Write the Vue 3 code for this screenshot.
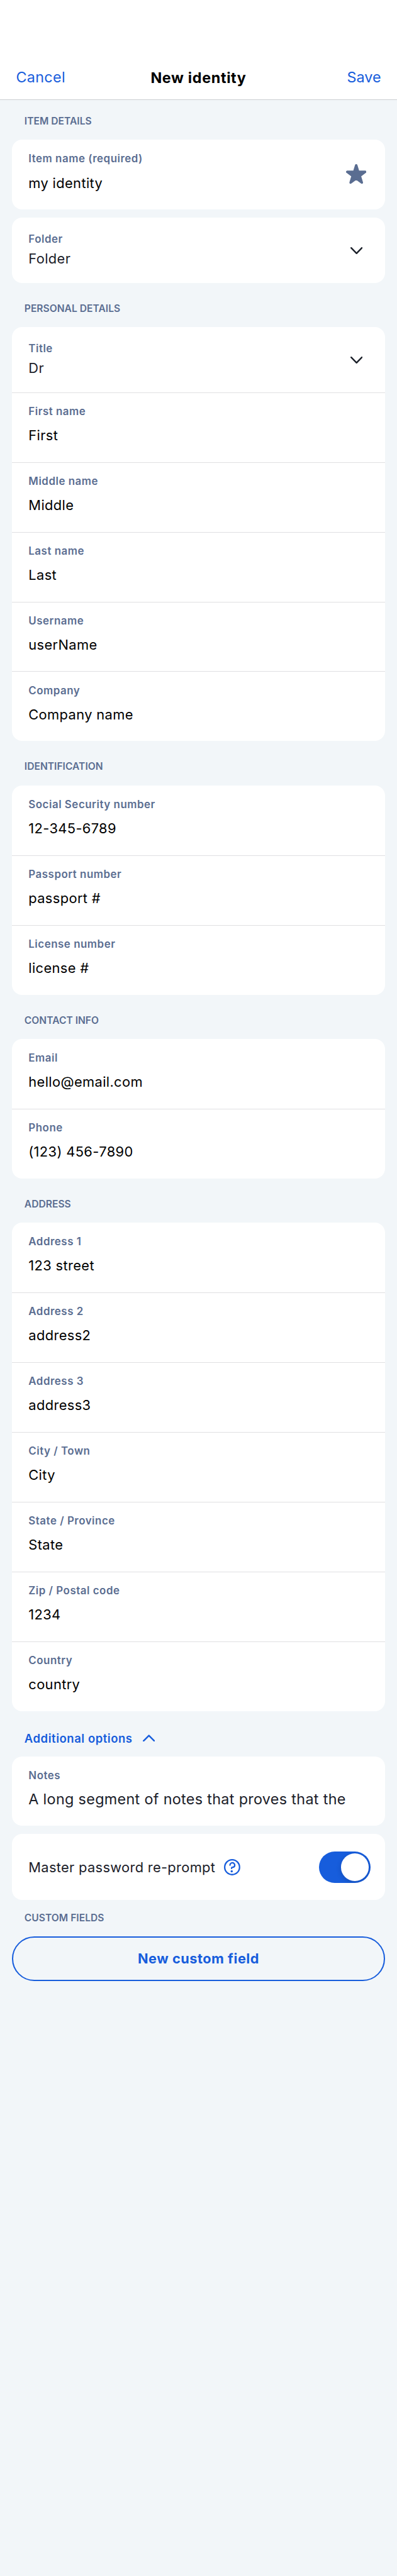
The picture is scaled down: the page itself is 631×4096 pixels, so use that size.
<script setup>
const sections = [
  {
    title: 'PERSONAL DETAILS',
    fields: [
      { label: 'Title', value: 'Dr', picker: true },
      { label: 'First name', value: 'First' },
      { label: 'Middle name', value: 'Middle' },
      { label: 'Last name', value: 'Last' },
      { label: 'Username', value: 'userName' },
      { label: 'Company', value: 'Company name' },
    ],
  },
  {
    title: 'IDENTIFICATION',
    fields: [
      { label: 'Social Security number', value: '12-345-6789' },
      { label: 'Passport number', value: 'passport #' },
      { label: 'License number', value: 'license #' },
    ],
  },
  {
    title: 'CONTACT INFO',
    fields: [
      { label: 'Email', value: 'hello@email.com' },
      { label: 'Phone', value: '(123) 456-7890' },
    ],
  },
  {
    title: 'ADDRESS',
    fields: [
      { label: 'Address 1', value: '123 street' },
      { label: 'Address 2', value: 'address2' },
      { label: 'Address 3', value: 'address3' },
      { label: 'City / Town', value: 'City' },
      { label: 'State / Province', value: 'State' },
      { label: 'Zip / Postal code', value: '1234' },
      { label: 'Country', value: 'country' },
    ],
  },
]
</script>

<template>
  <div class="screen">
    <header class="nav">
      <a class="action">Cancel</a>
      <h1>New identity</h1>
      <a class="action end">Save</a>
    </header>

    <main>
      <h2 class="first">ITEM DETAILS</h2>
      <div class="card">
        <div class="row">
          <div class="text">
            <span class="label">Item name (required)</span>
            <span class="value">my identity</span>
          </div>
          <svg class="star" viewBox="0 0 20 19.4">
            <path d="M10 1.2 12 7.6H18.8L13.5 11.5 15.5 18.1 10 14.1 4.5 18.1 6.5 11.5 1.2 7.6H8Z" />
          </svg>
        </div>
      </div>
      <div class="card gap">
        <div class="row picker">
          <div class="text">
            <span class="label">Folder</span>
            <span class="value">Folder</span>
          </div>
          <svg class="chevron" viewBox="0 0 12 7"><path d="M.75.75 6 6.05 11.25.75" /></svg>
        </div>
      </div>

      <template v-for="section in sections" :key="section.title">
        <h2>{{ section.title }}</h2>
        <div class="card">
          <div v-for="f in section.fields" :key="f.label" class="row" :class="{ picker: f.picker }">
            <div class="text">
              <span class="label">{{ f.label }}</span>
              <span class="value">{{ f.value }}</span>
            </div>
            <svg v-if="f.picker" class="chevron" viewBox="0 0 12 7"><path d="M.75.75 6 6.05 11.25.75" /></svg>
          </div>
        </div>
      </template>

      <button class="more">
        <span>Additional options</span>
        <svg class="chevron" viewBox="0 0 12 7"><path d="M.75 6.25 6 .95 11.25 6.25" /></svg>
      </button>

      <div class="card">
        <div class="row notes">
          <div class="text">
            <span class="label">Notes</span>
            <span class="value">A long segment of notes that proves that the</span>
          </div>
        </div>
      </div>

      <div class="card gap reprompt">
        <span class="prompt">Master password re-prompt</span>
        <svg class="help" viewBox="0 0 16 16">
          <circle cx="8" cy="8" r="7.3" />
          <path d="M5.9 6A2.35 2.35 0 0 1 8.2 3.7 2.35 2.35 0 0 1 10.6 5.9C10.6 7.4 9.6 8.1 8.3 8.1 7.7 8.1 7.5 8.3 7.5 8.8V9.2" />
          <circle class="dot" cx="7.6" cy="12" r="1.1" />
        </svg>
        <span class="toggle"><span class="knob"></span></span>
      </div>

      <h2 class="custom">CUSTOM FIELDS</h2>
      <button class="outline">New custom field</button>
    </main>
  </div>
</template>

<style>
/* 1rem is ten points of the 390-point-wide layout */
html {
  font-size: 16.179px;
}
body {
  margin: 0;
  background: #f2f6f9;
}
</style>

<style scoped>
.screen {
  width: 39rem;
  height: 4096px;
  overflow: hidden;
  background: #f2f6f9;
  font-family: Inter, 'Open Sans', sans-serif;
  color: #000;
}
.nav {
  box-sizing: border-box;
  height: 9.83rem;
  padding: 5.47rem 1.57rem 0;
  display: grid;
  grid-template-columns: 1fr auto 1fr;
  align-items: start;
  background: #fff;
  border-bottom: 1px solid #cccfd1;
}
.nav h1,
.action {
  margin: 0;
  font-size: 1.444rem;
  line-height: 4.4rem;
}
.nav h1 {
  font-weight: 700;
  letter-spacing: 0.028em;
}
.action {
  line-height: 4.27rem;
  letter-spacing: 0.014em;
  color: #175ddc;
}
.end {
  text-align: right;
  letter-spacing: 0;
}
main {
  padding: 0 1.2rem;
}
h2 {
  margin: 0;
  height: 4.333rem;
  padding-left: 1.2rem;
  font-size: 0.963rem;
  line-height: 5.11rem;
  font-weight: 600;
  letter-spacing: 0.002em;
  color: #5a6d91;
}
h2.first {
  height: 3.9rem;
  line-height: 4.25rem;
}
.card {
  background: #fff;
  border-radius: 1rem;
}
.gap {
  margin-top: 0.8rem;
}
.row {
  box-sizing: border-box;
  height: 6.86rem;
  padding: 1.12rem 1.6rem 0;
  display: flex;
  align-items: flex-start;
  justify-content: space-between;
}
.row + .row {
  padding-top: 1.07rem;
  border-top: 1px solid #e0e0e2;
}
.text {
  display: flex;
  flex-direction: column;
}
.label {
  font-size: 1.045rem;
  line-height: 1.6rem;
  font-weight: 600;
  letter-spacing: 0.031em;
  color: #5a6d91;
}
.value {
  margin-top: 0.52rem;
  font-size: 1.353rem;
  line-height: 2rem;
  letter-spacing: 0.016em;
  white-space: nowrap;
}
.picker {
  height: 6.41rem;
  padding-top: 1.38rem;
}
.picker .value {
  margin-top: 0.03rem;
  color: #1b2029;
}
.star {
  width: 2rem;
  height: 1.94rem;
  margin: 1.31rem 0.2rem 0 0;
  fill: #5a6d91;
  stroke: #5a6d91;
  stroke-width: 2.4;
  stroke-linejoin: round;
}
.chevron {
  width: 1.2rem;
  height: 0.7rem;
  margin: 1.51rem 0.6rem 0;
  fill: none;
  stroke: #1b2029;
  stroke-width: 1.5;
  stroke-linecap: round;
  stroke-linejoin: round;
}
button {
  border: 0;
  padding: 0;
  background: none;
  font-family: inherit;
  color: #175ddc;
}
.more {
  box-sizing: border-box;
  display: flex;
  align-items: center;
  height: 4.47rem;
  padding: 0.85rem 0 0 1.2rem;
  font-size: 1.146rem;
  font-weight: 600;
  letter-spacing: 0.028em;
}
.more .chevron {
  margin: 0 0 0 1rem;
  stroke: #175ddc;
}
.notes {
  height: 6.83rem;
}
.notes .value,
.prompt {
  color: #1b2029;
}
.notes .value {
  margin-top: 0.48rem;
  font-size: 1.444rem;
  letter-spacing: 0.0136em;
}
.reprompt {
  display: flex;
  align-items: center;
  height: 6.5rem;
  padding: 0 1.4rem 0 1.6rem;
}
.prompt {
  font-size: 1.353rem;
  letter-spacing: 0.0137em;
}
.help {
  width: 1.6rem;
  height: 1.6rem;
  margin-left: 0.87rem;
  fill: none;
  stroke: #175ddc;
  stroke-width: 1.4;
  stroke-linecap: round;
}
.help .dot {
  fill: #175ddc;
  stroke: none;
}
.toggle {
  box-sizing: border-box;
  width: 5.09rem;
  height: 3.1rem;
  margin-left: auto;
  padding: 0.2rem;
  display: flex;
  justify-content: flex-end;
  overflow: hidden;
  border-radius: 1.55rem;
  background: #175ddc;
}
.knob {
  width: 2.7rem;
  height: 2.7rem;
  border-radius: 50%;
  background: #fff;
  box-shadow: 0 3px 8px rgba(0, 0, 0, 0.15);
}
h2.custom {
  height: 3.53rem;
  line-height: 3.53rem;
}
.outline {
  box-sizing: border-box;
  width: 100%;
  height: 4.4rem;
  border: 0.15rem solid #175ddc;
  border-radius: 2.2rem;
  font-size: 1.344rem;
  font-weight: 700;
  letter-spacing: 0.024em;
}
</style>
